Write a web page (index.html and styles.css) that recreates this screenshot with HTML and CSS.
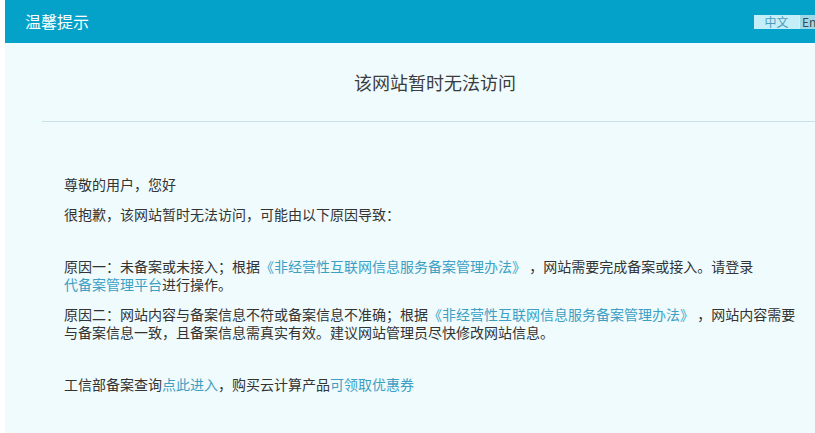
FILE: index.html
```html
<!DOCTYPE html>
<html lang="zh-CN">
<head>
<meta charset="utf-8">
<title>温馨提示</title>
<link rel="stylesheet" href="styles.css">
</head>
<body>
<div class="page">
  <div class="header">
    <span class="header-title">温馨提示</span>
    <div class="lang">
      <span class="lang-item lang-active">中文</span><span class="lang-item lang-en">English</span>
    </div>
  </div>
  <h1 class="title">该网站暂时无法访问</h1>
  <div class="divider"></div>
  <div class="body">
    <p class="p p-first">尊敬的用户，您好</p>
    <p class="p">很抱歉，该网站暂时无法访问，可能由以下原因导致：</p>
    <p class="p p-group">原因一：未备案或未接入；根据<a class="link" href="#">《非经营性互联网信息服务备案管理办法》</a> ，网站需要完成备案或接入。请登录<br><a class="link" href="#">代备案管理平台</a>进行操作。</p>
    <p class="p">原因二：网站内容与备案信息不符或备案信息不准确；根据<a class="link" href="#">《非经营性互联网信息服务备案管理办法》</a> ，网站内容需要<br>与备案信息一致，且备案信息需真实有效。建议网站管理员尽快修改网站信息。</p>
    <p class="p p-group">工信部备案查询<a class="link" href="#">点此进入</a>，购买云计算产品<a class="link" href="#">可领取优惠券</a></p>
  </div>
</div>
</body>
</html>
```
FILE: styles.css
```css
html, body {
  margin: 0;
  padding: 0;
  overflow: hidden;
  background: #ffffff;
}
body {
  font-family: "Noto Sans CJK SC", "Noto Sans", sans-serif;
  color: #333333;
}
.page {
  margin-left: 5px;
  width: 860px;
  min-height: 100vh;
  background: #effbfd;
}
.header {
  height: 43px;
  background: #04a2c8;
  display: flex;
  align-items: center;
  justify-content: space-between;
  padding: 0 20px;
}
.header-title {
  color: #ffffff;
  font-size: 16px;
  line-height: 43px;
}
.lang {
  display: flex;
  align-items: center;
  height: 14px;
  margin-top: 1px;
}
.lang-item {
  font-size: 12px;
  line-height: 14px;
  height: 14px;
  padding: 0 0;
}
.lang-active {
  background: #c4eef8;
  color: #4a9cbc;
  width: 45px;
  text-align: center;
}
.lang-en {
  background: #9fd9e8;
  color: #3a4a50;
  border-left: 1px solid #d7f1f7;
  padding-left: 2px;
  width: 43px;
  overflow: hidden;
}
.title {
  margin: 27px 0 0 0;
  font-size: 18px;
  font-weight: normal;
  line-height: 24px;
  text-align: center;
  color: #3c3c3c;
}
.divider {
  margin: 27px 0 0 37px;
  height: 1px;
  background: #c6e2e6;
}
.body {
  padding: 53px 0 40px 59px;
}
.p {
  margin: 12px 0 0 0;
  font-size: 14px;
  line-height: 18px;
  color: #333333;
}
.p-first {
  margin-top: 0;
}
.p-group {
  margin-top: 34px;
}
.link {
  color: #3d9fc3;
  text-decoration: none;
}
```
